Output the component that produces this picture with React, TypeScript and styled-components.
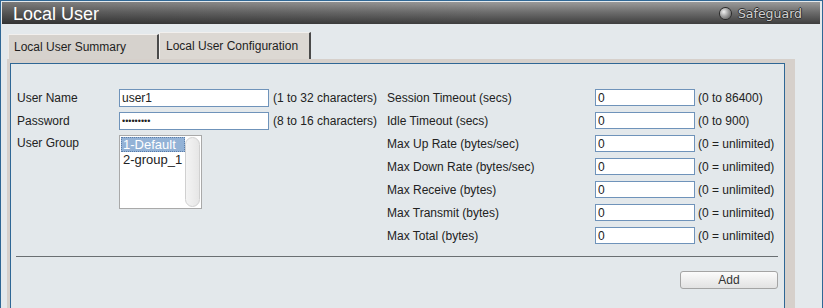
import React from "react";
import styled, { createGlobalStyle } from "styled-components";

const Global = createGlobalStyle`
  html, body { margin: 0; padding: 0; background: #e4e9ec; }
  body { font-family: "Liberation Sans", Arial, sans-serif; font-size: 12px; color: #222; }
  * { box-sizing: border-box; }
`;

const Frame = styled.div`
  width: 823px;
  height: 308px;
  overflow: hidden;
  border: 1px solid #2f6795;
  border-bottom: none;
  background: #e4e9ec;
  padding: 1px 2px 0 1px;
  display: flex;
  flex-direction: column;
`;

const Header = styled.div`
  height: 22px;
  display: flex;
  align-items: center;
  justify-content: space-between;
  padding: 0 18px 0 11px;
  background:
    linear-gradient(to right, rgba(0,0,0,0.2), rgba(0,0,0,0) 60%),
    linear-gradient(to bottom, #9a9a9a 0%, #6e6e6e 45%, #3e3e3e 100%);
`;

const Title = styled.div`
  color: #fff;
  font-size: 18px;
  line-height: 22px;
  margin-top: 1px;
`;

const Safeguard = styled.div`
  display: flex;
  align-items: center;
  gap: 7px;
  font-family: "DejaVu Sans", Verdana, sans-serif;
  font-size: 12.5px;
  color: #cfcfcf;
  text-shadow: -1px 0 #303030, 1px 0 #303030, 0 -1px #303030, 0 1px #303030;
`;

const Led = styled.span`
  width: 11px;
  height: 11px;
  border-radius: 50%;
  background: radial-gradient(circle at 35% 35%, #f0f0f0 0%, #a0a0a0 45%, #4a4a4a 100%);
  box-shadow: 0 0 0 1px #2a2a2a;
`;

const Body = styled.div`
  padding: 8px 0 0 5px;
  display: flex;
  flex-direction: column;
  flex: 1;
`;

const TabBar = styled.div`
  display: flex;
  align-items: flex-end;
  height: 27px;
  padding-left: 1px;
`;

const Tab = styled.div<{ $active?: boolean }>`
  height: ${(p) => (p.$active ? 27 : 25)}px;
  width: ${(p) => (p.$active ? 152 : 151)}px;
  background: ${(p) => (p.$active ? "#dcd8d3" : "#d6d2cd")};
  border-top: 1px solid #f2f0ee;
  border-left: 1px solid ${(p) => (p.$active ? "#f2f0ee" : "#eeeae6")};
  border-right: 2px solid #4a4a4a;
  display: flex;
  align-items: center;
  padding-left: ${(p) => (p.$active ? 6 : 5)}px;
  padding-bottom: ${(p) => (p.$active ? 1 : 0)}px;
  color: #1e1e1e;
  font-size: 12px;
`;

const Panel = styled.div`
  flex: 1;
  background: #d6d0cb;
  padding: 4px 10px 0 3px;
  margin-right: 25px;
  display: flex;
`;

const Inner = styled.div`
  flex: 1;
  border: 1px solid #2f6795;
  border-bottom: none;
  background: #e3e8eb;
  padding: 25px 6px 0 5px;
`;

const Grid = styled.div`
  display: grid;
  grid-template-columns: 103px 150px 117px 209px 100px auto;
  grid-template-rows: repeat(7, 23px);
`;

const Label = styled.div<{ $top?: boolean }>`
  display: flex;
  align-items: ${(p) => (p.$top ? "flex-start" : "center")};
  padding-top: ${(p) => (p.$top ? 1 : 0)}px;
  padding-left: 1px;
  white-space: nowrap;
  height: ${(p) => (p.$top ? "auto" : "18px")};
`;

const Note = styled.div<{ $pad?: number }>`
  padding-left: ${(p) => p.$pad ?? 4}px;
  white-space: nowrap;
  height: 18px;
  display: flex;
  align-items: center;
`;

const TextInput = styled.input<{ $h?: number }>`
  width: 100%;
  height: ${(p) => p.$h ?? 18}px;
  margin: 0;
  border: 1px solid #6f93ba;
  background: #fff;
  padding: 0 2px;
  font-family: "Liberation Sans", Arial, sans-serif;
  font-size: 12px;
  color: #222;
  outline: none;
  &[type="password"] { font-size: 9px; letter-spacing: 0px; }
`;

const ListBox = styled.div`
  grid-column: 2;
  grid-row: 3 / span 4;
  width: 83px;
  height: 74px;
  background: #fff;
  border: 1px solid #a9a9a9;
  position: relative;
  padding: 1px 0 0 1px;
  font-size: 13px;
  line-height: 15px;
`;

const Option = styled.div<{ $sel?: boolean }>`
  width: 64px;
  padding-left: 2px;
  color: ${(p) => (p.$sel ? "#fff" : "#222")};
  background: ${(p) => (p.$sel ? "#93b2d6" : "transparent")};
  outline: ${(p) => (p.$sel ? "1px dotted #5a7da8" : "none")};
  outline-offset: -1px;
`;

const ScrollTrack = styled.div`
  position: absolute;
  top: 1px;
  right: 1px;
  bottom: 1px;
  width: 15px;
  border-radius: 8px;
  background: linear-gradient(to right, #f4f4f4, #e6e6e6);
  border: 1px solid #d0d0d0;
`;

const Separator = styled.div`
  margin-top: 6px;
  height: 1px;
  background: #6a6f72;
`;

const Actions = styled.div`
  display: flex;
  justify-content: flex-end;
  padding-top: 14px;
`;

const Button = styled.button`
  width: 98px;
  height: 18px;
  border: 1px solid #a4a4a4;
  border-radius: 3px;
  background: linear-gradient(to bottom, #fbfbfb, #e2e2e2);
  font-family: "Liberation Sans", Arial, sans-serif;
  font-size: 12px;
  color: #333;
  padding: 0;
`;

const leftRows = [
  { label: "User Name", value: "user1", note: "(1 to 32 characters)", type: "text" },
  { label: "Password", value: "123456789", note: "(8 to 16 characters)", type: "password" },
];

const rightRows = [
  { label: "Session Timeout (secs)", note: "(0 to 86400)" },
  { label: "Idle Timeout (secs)", note: "(0 to 900)" },
  { label: "Max Up Rate (bytes/sec)", note: "(0 = unlimited)" },
  { label: "Max Down Rate (bytes/sec)", note: "(0 = unlimited)" },
  { label: "Max Receive (bytes)", note: "(0 = unlimited)" },
  { label: "Max Transmit (bytes)", note: "(0 = unlimited)" },
  { label: "Max Total (bytes)", note: "(0 = unlimited)" },
];

export default function App() {
  return (
    <>
      <Global />
      <Frame>
        <Header>
          <Title>Local User</Title>
          <Safeguard>
            <Led />
            Safeguard
          </Safeguard>
        </Header>
        <Body>
          <TabBar>
            <Tab>Local User Summary</Tab>
            <Tab $active>Local User Configuration</Tab>
          </TabBar>
          <Panel>
            <Inner>
              <Grid>
                {leftRows.map((r, i) => (
                  <React.Fragment key={r.label}>
                    <Label style={{ gridRow: i + 1, gridColumn: 1 }}>{r.label}</Label>
                    <div style={{ gridRow: i + 1, gridColumn: 2 }}>
                      <TextInput type={r.type} value={r.value} readOnly />
                    </div>
                    <Note style={{ gridRow: i + 1, gridColumn: 3 }}>{r.note}</Note>
                  </React.Fragment>
                ))}
                <Label $top style={{ gridRow: 3, gridColumn: 1 }}>User Group</Label>
                <ListBox>
                  <Option $sel>1-Default</Option>
                  <Option>2-group_1</Option>
                  <ScrollTrack />
                </ListBox>
                {rightRows.map((r, i) => (
                  <React.Fragment key={r.label}>
                    <Label style={{ gridRow: i + 1, gridColumn: 4 }}>{r.label}</Label>
                    <div style={{ gridRow: i + 1, gridColumn: 5 }}>
                      <TextInput $h={17} value="0" readOnly />
                    </div>
                    <Note $pad={3} style={{ gridRow: i + 1, gridColumn: 6 }}>{r.note}</Note>
                  </React.Fragment>
                ))}
              </Grid>
              <Separator />
              <Actions>
                <Button>Add</Button>
              </Actions>
            </Inner>
          </Panel>
        </Body>
      </Frame>
    </>
  );
}
